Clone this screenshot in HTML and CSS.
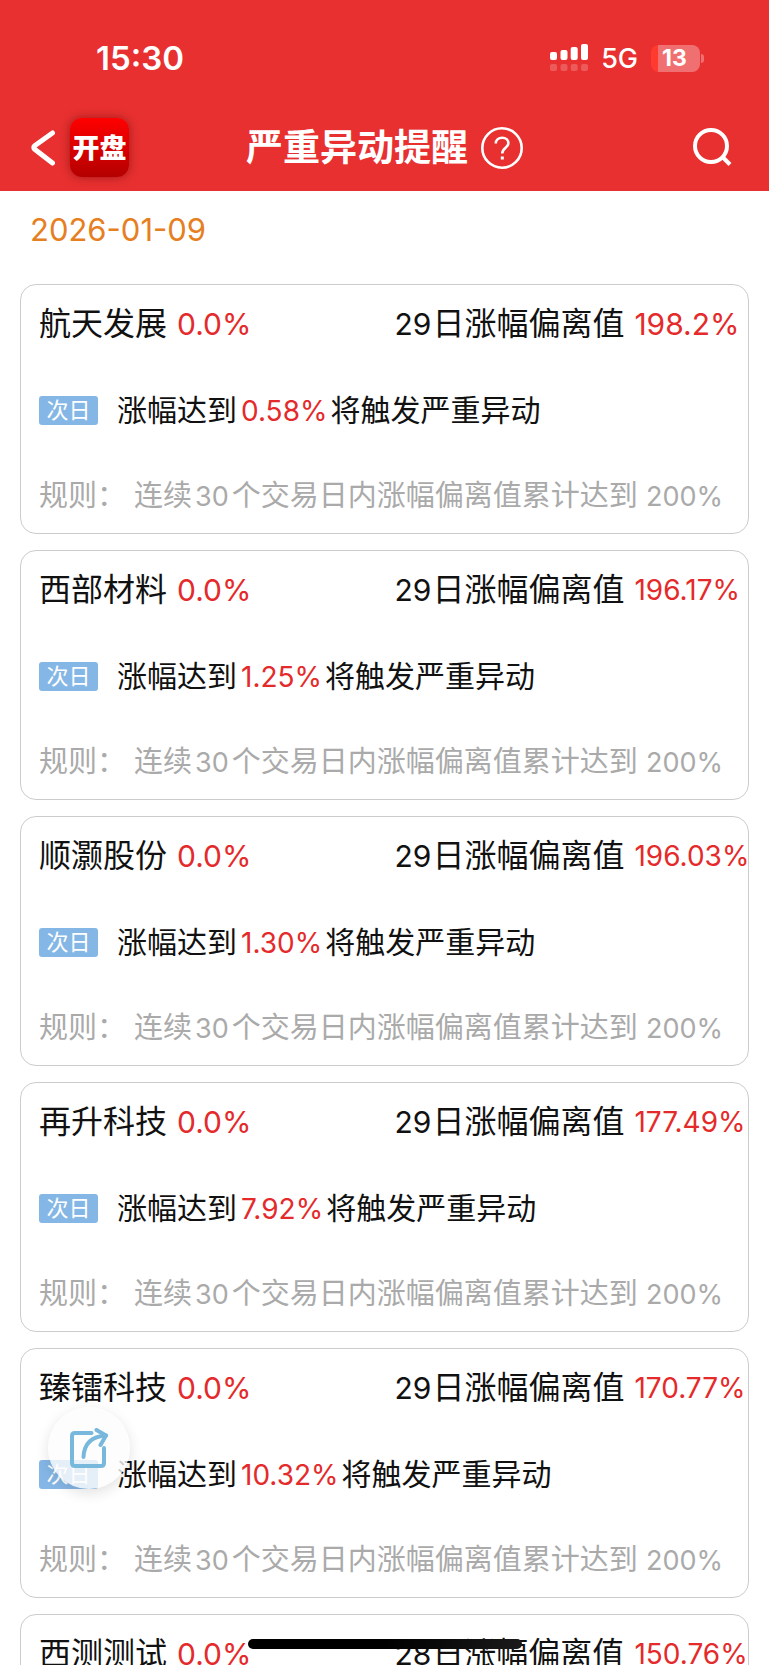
FILE: index.html
```html
<!DOCTYPE html>
<html lang="zh-CN">
<head>
<meta charset="utf-8">
<meta name="viewport" content="width=device-width, initial-scale=1">
<title>严重异动提醒</title>
<link rel="stylesheet" href="styles.css">
</head>
<body>
<div class="app">
  <header class="header">
    <div class="status">
      <span class="status-time">15:30</span>
      <div class="status-icons">
        <svg class="signal" viewBox="0 0 38 28" aria-hidden="true">
          <g fill="#fff"><rect x="0" y="8" width="7" height="8" rx="2"/><rect x="10.5" y="6" width="7" height="10" rx="2"/><rect x="20.7" y="3" width="7" height="13" rx="2"/><rect x="31" y="0" width="7" height="16" rx="2"/></g>
          <g fill="#fff" opacity=".2"><rect x="0" y="20" width="7" height="7" rx="2"/><rect x="10.5" y="20" width="7" height="7" rx="2"/><rect x="20.7" y="20" width="7" height="7" rx="2"/><rect x="31" y="20" width="7" height="7" rx="2"/></g>
        </svg>
        <span class="network">5G</span>
        <span class="battery"><span class="battery-body">13</span><span class="battery-tip"></span></span>
      </div>
    </div>
    <nav class="nav">
      <div class="nav-left">
        <button class="icon-button" type="button" aria-label="返回">
          <svg class="back" viewBox="0 0 24 36" aria-hidden="true"><path d="M21.500 3 L4 15.500 Q1.500 17.500 4 19.500 L21.500 33" fill="none" stroke="#fff" stroke-width="5" stroke-linecap="round" stroke-linejoin="round"/></svg>
        </button>
        <span class="logo">开盘</span>
      </div>
      <div class="nav-title">
        <h1 class="title">严重异动提醒</h1>
        <button class="icon-button" type="button" aria-label="说明">
          <svg class="help" viewBox="0 0 42 42" aria-hidden="true"><circle cx="21" cy="21" r="19.700" fill="none" stroke="#fff" stroke-width="2.600"/><path d="M14.800 16.500 C14.800 12.800 17.600 10.700 21.200 10.700 C24.800 10.700 27.400 13 27.400 16.300 C27.400 20.700 21.200 20.800 21.200 26.500" fill="none" stroke="#fff" stroke-width="2.500"/><rect x="19.800" y="29.500" width="3" height="3" fill="#fff"/></svg>
        </button>
      </div>
      <div class="nav-right">
        <button class="icon-button" type="button" aria-label="搜索">
          <svg class="search" viewBox="0 0 39 39" aria-hidden="true"><circle cx="18" cy="18" r="16" fill="none" stroke="#fff" stroke-width="4"/><path d="M29 28.500 L37 36.500" stroke="#fff" stroke-width="4"/></svg>
        </button>
      </div>
    </nav>
  </header>
  <main class="content">
    <time class="date" datetime="2026-01-09">2026-01-09</time>
    <section class="cards">
      <article class="card">
        <div class="row summary"><div class="stock"><h2 class="name">航天发展</h2><span class="up">0.0%</span></div><div class="deviation"><span><i>29</i>日涨幅偏离值</span><span class="up">198.2%</span></div></div>
        <p class="row trigger"><span class="badge">次日</span><span class="trigger-text">涨幅达到<b class="up">0.58%</b>将触发严重异动</span></p>
        <p class="row rule"><span>规则：</span><span>连续<i class="days">30</i>个交易日内涨幅偏离值累计达到 <i>200%</i></span></p>
      </article>
      <article class="card">
        <div class="row summary"><div class="stock"><h2 class="name">西部材料</h2><span class="up">0.0%</span></div><div class="deviation"><span><i>29</i>日涨幅偏离值</span><span class="up long">196.17%</span></div></div>
        <p class="row trigger"><span class="badge">次日</span><span class="trigger-text">涨幅达到<b class="up">1.25%</b>将触发严重异动</span></p>
        <p class="row rule"><span>规则：</span><span>连续<i class="days">30</i>个交易日内涨幅偏离值累计达到 <i>200%</i></span></p>
      </article>
      <article class="card">
        <div class="row summary"><div class="stock"><h2 class="name">顺灏股份</h2><span class="up">0.0%</span></div><div class="deviation"><span><i>29</i>日涨幅偏离值</span><span class="up long">196.03%</span></div></div>
        <p class="row trigger"><span class="badge">次日</span><span class="trigger-text">涨幅达到<b class="up">1.30%</b>将触发严重异动</span></p>
        <p class="row rule"><span>规则：</span><span>连续<i class="days">30</i>个交易日内涨幅偏离值累计达到 <i>200%</i></span></p>
      </article>
      <article class="card">
        <div class="row summary"><div class="stock"><h2 class="name">再升科技</h2><span class="up">0.0%</span></div><div class="deviation"><span><i>29</i>日涨幅偏离值</span><span class="up long">177.49%</span></div></div>
        <p class="row trigger"><span class="badge">次日</span><span class="trigger-text">涨幅达到<b class="up">7.92%</b>将触发严重异动</span></p>
        <p class="row rule"><span>规则：</span><span>连续<i class="days">30</i>个交易日内涨幅偏离值累计达到 <i>200%</i></span></p>
      </article>
      <article class="card">
        <div class="row summary"><div class="stock"><h2 class="name">臻镭科技</h2><span class="up">0.0%</span></div><div class="deviation"><span><i>29</i>日涨幅偏离值</span><span class="up long">170.77%</span></div></div>
        <p class="row trigger"><span class="badge">次日</span><span class="trigger-text">涨幅达到<b class="up">10.32%</b>将触发严重异动</span></p>
        <p class="row rule"><span>规则：</span><span>连续<i class="days">30</i>个交易日内涨幅偏离值累计达到 <i>200%</i></span></p>
      </article>
      <article class="card">
        <div class="row summary"><div class="stock"><h2 class="name">西测测试</h2><span class="up">0.0%</span></div><div class="deviation"><span><i>28</i>日涨幅偏离值</span><span class="up long">150.76%</span></div></div>
      </article>
    </section>
  </main>
  <button class="share" type="button" aria-label="分享">
    <svg class="share-icon" viewBox="0 0 38 40" aria-hidden="true"><g fill="none" stroke="#78b8dc" stroke-width="4" stroke-linecap="round" stroke-linejoin="round"><path d="M21.500 5 H5 Q2 5 2 8 V35 Q2 38 5 38 H31 Q34 38 34 35 V20"/><path d="M13.500 29 C14 17 20 8.500 36 7.500"/><path d="M26.500 2 L36 7.500 L30.500 17"/></g></svg>
  </button>
  <div class="home-indicator"></div>
</div>
</body>
</html>
```
FILE: styles.css
```css
* { box-sizing: border-box; }

body {
  margin: 0;
  background: #fff;
  color: #111;
  font-family: Inter, "Noto Sans CJK SC", sans-serif;
  font-size: 32px;
}

h1, h2, p { margin: 0; font-weight: 400; }
b, i { font-weight: 400; font-style: normal; }

.app {
  position: relative;
  height: 100vh;
  overflow: hidden;
}

.header {
  height: 191px;
  padding-top: 32px;
  background: #e83030;
  color: #fff;
}

.status {
  display: flex;
  justify-content: space-between;
  align-items: center;
  height: 52px;
  padding: 0 65px 0 96px;
}
.status-time { font-size: 33px; font-weight: 600; }
.status-icons { display: flex; align-items: center; }
.signal { width: 38px; height: 28px; }
.network { margin: 0 13px; font-size: 27px; font-weight: 500; }
.battery { display: flex; align-items: center; gap: 1px; }
.battery-body {
  width: 49px;
  height: 27px;
  padding-right: 2px;
  border-radius: 8px;
  background: linear-gradient(90deg, #ff3b30 7px, #f07072 7px);
  font-size: 23px;
  font-weight: 700;
  line-height: 27px;
  text-align: center;
}
.battery-tip { width: 3px; height: 9px; border-radius: 0 3px 3px 0; background: #f07072; }

.nav {
  display: grid;
  grid-template-columns: 1fr auto 1fr;
  align-items: center;
  height: 127px;
}
.nav-left { display: flex; align-items: center; gap: 15px; padding-left: 31px; }
.nav-title { display: flex; align-items: center; gap: 13px; }
.nav-right { display: flex; justify-content: flex-end; padding-right: 37px; }
.icon-button { display: flex; padding: 0; border: 0; background: none; }
.back { width: 24px; height: 36px; }
.help { width: 42px; height: 42px; }
.search { width: 39px; height: 39px; }
.title { font-size: 37px; font-weight: 700; line-height: 56px; }
.logo {
  width: 59px;
  height: 59px;
  border-radius: 12px;
  background: linear-gradient(#f00, #b40000);
  box-shadow: 0 0 10px rgba(90, 0, 0, 0.5);
  font-size: 27px;
  font-weight: 900;
  line-height: 61px;
  text-align: center;
}

.date {
  display: block;
  height: 93px;
  padding: 0 30px;
  color: #e67e22;
  font-size: 31px;
  line-height: 78px;
}

.cards { display: flex; flex-direction: column; gap: 16px; padding: 0 20px; }
.card {
  display: flex;
  flex-direction: column;
  gap: 36px;
  min-height: 250px;
  padding: 14px 0 12px 18px;
  border: 1px solid #ccc;
  border-radius: 16px;
}
.row { display: flex; align-items: center; height: 50px; line-height: 50px; white-space: nowrap; }
.summary { display: grid; grid-template-columns: minmax(0, 1fr) minmax(0, 1fr); }
.summary .up, .summary i { font-size: 30px; }
.summary i { margin: 0 1px; }
.summary .long { font-size: 28px; }
.stock, .deviation { display: flex; gap: 10px; }
.name { font-size: 32px; }
.up { color: #e42a2a; }
.trigger { gap: 19px; font-size: 30px; }
.trigger-text .up { margin: 0 3px 0 4px; font-size: 28px; }
.badge {
  width: 59px;
  height: 29px;
  border-radius: 3px;
  background: #85b7e6;
  color: #fff;
  font-size: 22px;
  line-height: 28px;
  text-align: center;
}
.rule { gap: 8px; color: #aaa; font-size: 29px; }
.rule i { font-size: 27px; }
.rule .days { margin: 0 3px; }

.share {
  position: absolute;
  bottom: 176px;
  left: 48px;
  display: flex;
  align-items: center;
  justify-content: center;
  width: 82px;
  height: 82px;
  padding: 0;
  border: 0;
  border-radius: 50%;
  background: rgba(252, 252, 252, 0.8);
  box-shadow: 0 4px 14px rgba(0, 0, 0, 0.12);
}
.share-icon { width: 38px; height: 40px; }

.home-indicator {
  position: absolute;
  bottom: 16px;
  left: 50%;
  width: 274px;
  height: 10px;
  border-radius: 5px;
  background: linear-gradient(90deg, #000 50%, #1a1a1a);
  transform: translateX(-50%);
}
```
